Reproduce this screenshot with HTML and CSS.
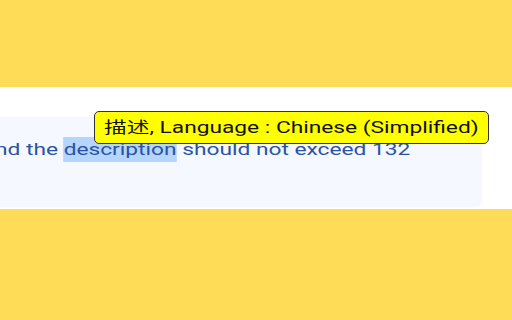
FILE: index.html
```html
<!DOCTYPE html>
<html lang="en">
<head>
<meta charset="utf-8">
<title>Description</title>
<link rel="stylesheet" href="styles.css">
</head>
<body>
<div class="top"></div>
<section class="band">
  <div class="panel">
    <p class="line"><span class="wide">nd the <span class="sel">description</span> should not exceed 132</span></p>
  </div>
</section>
<div class="tooltip"><span class="wide">描述, Language : Chinese (Simplified)</span></div>
</body>
</html>
```
FILE: styles.css
```css
html, body {
  margin: 0;
  padding: 0;
}
body {
  width: 512px;
  height: 320px;
  overflow: hidden;
  background: #ffdc57;
  font-family: Roboto, "Noto Sans CJK SC", sans-serif;
  font-size: 16px;
  position: relative;
}
.top {
  height: 87px;
}
.band {
  background: #ffffff;
  height: 122px;
  box-sizing: border-box;
  padding: 30px 0 2px 0;
}
.panel {
  height: 90px;
  box-sizing: border-box;
  margin-left: -10px;
  width: 492px;
  background: #f5f8ff;
  border-radius: 0 6px 6px 0;
  padding: 21px 0 0 5px;
}
.line {
  margin: 0;
  line-height: 24px;
  color: #2b53a5;
  white-space: nowrap;
}
.wide {
  display: inline-block;
  transform: scaleX(1.42);
  transform-origin: 0 50%;
  white-space: nowrap;
}
.sel {
  background: #b4d5fd;
  padding: 3px 0;
}
.tooltip {
  position: absolute;
  left: 94px;
  top: 111px;
  width: 395px;
  height: 33px;
  box-sizing: border-box;
  background: #ffff00;
  border: 1px solid #333333;
  border-radius: 5px;
  padding-left: 9px;
  line-height: 31px;
  color: #111111;
  white-space: nowrap;
}
```
